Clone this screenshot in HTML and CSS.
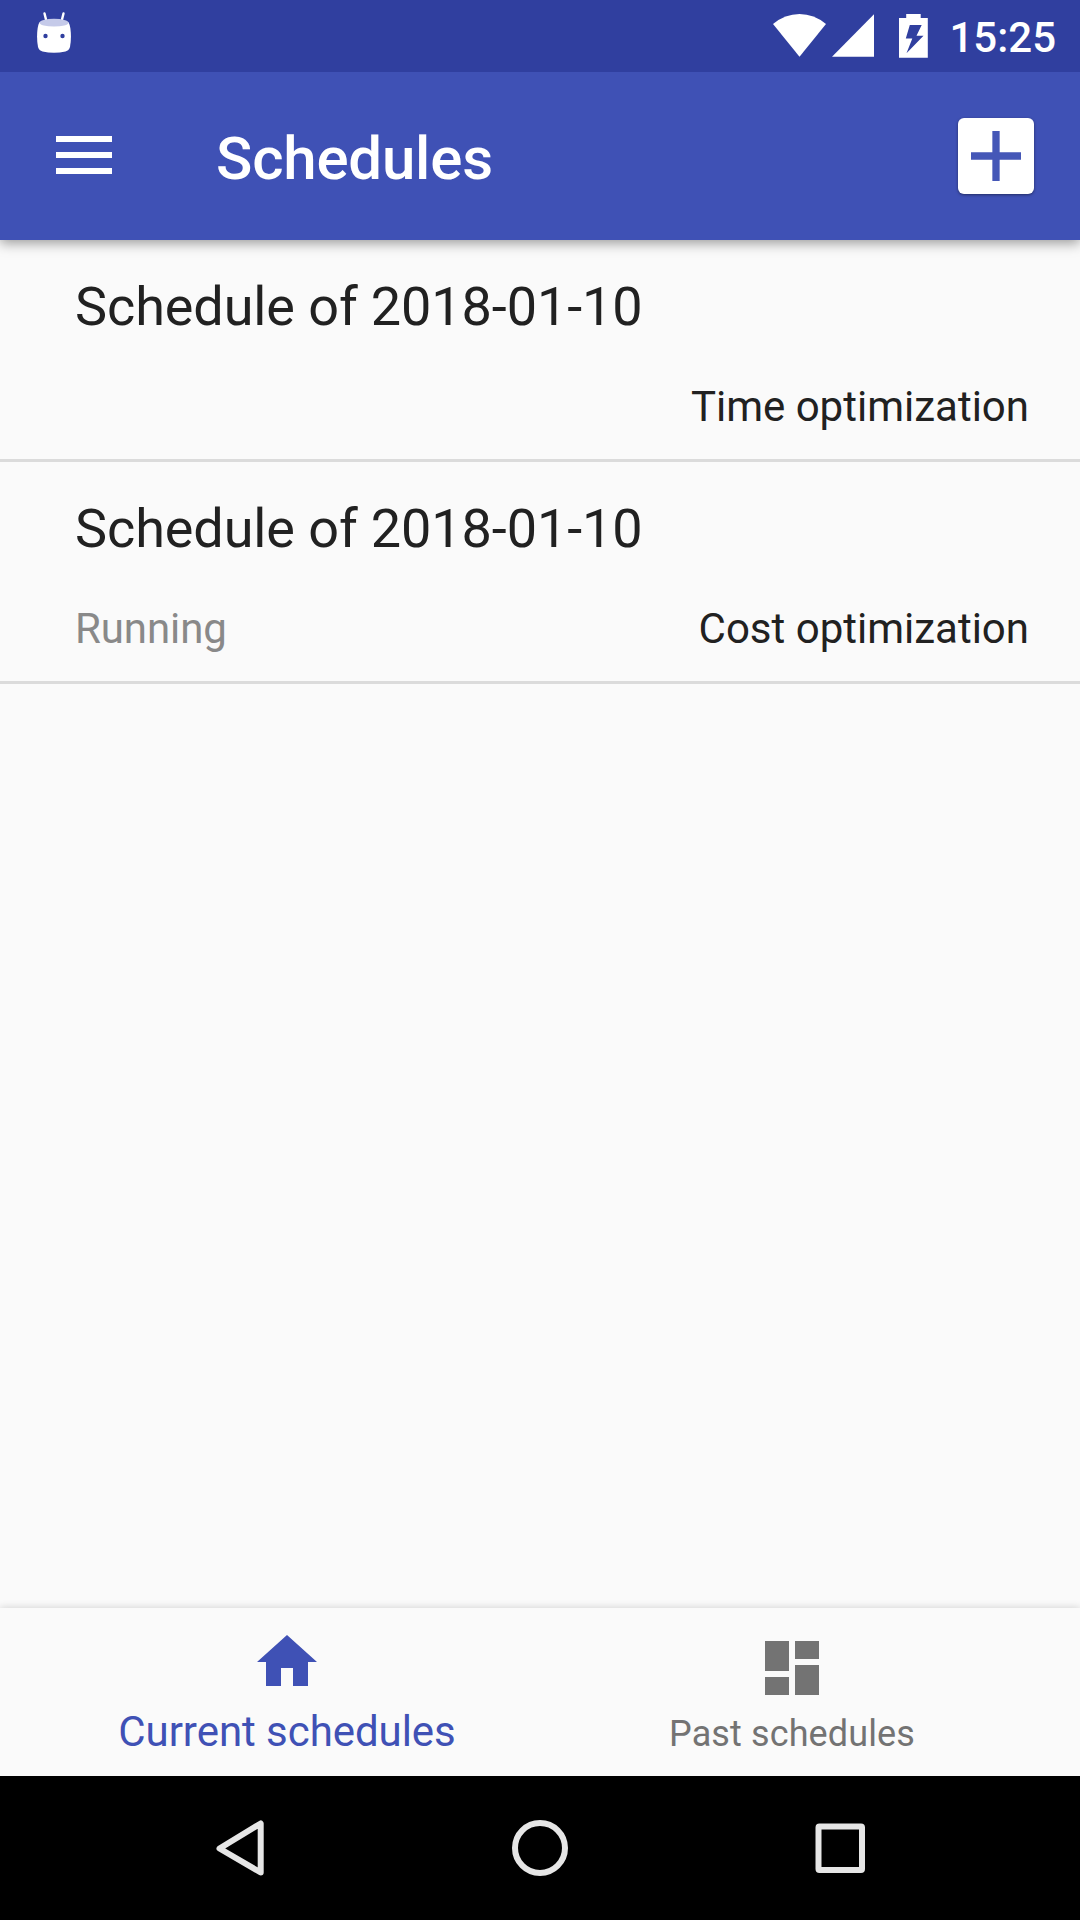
FILE: index.html
```html
<!DOCTYPE html>
<html lang="en">
<head>
<meta charset="utf-8">
<title>Schedules</title>
<link rel="stylesheet" href="styles.css">
</head>
<body>
<div class="screen">
  <header class="status-bar">
    <svg class="status-droid" width="34" height="42" viewBox="37 12 34 42">
      <path d="M44.5 13.5L46.5 21.5M63.5 13.5L61.5 21.5" stroke="#fff" stroke-width="2.4" stroke-linecap="round"/>
      <path d="M39.3 22.5C44 19 64 19 68.700 22.500C71 27 71.700 38 70 47Q69 50.500 65.500 51.500Q54 54 42.500 51.500Q39 50.500 38 47C36.300 38 37 27 39.300 22.500Z" fill="#fff"/>
      <ellipse cx="54" cy="22.700" rx="14.500" ry="3.900" fill="#c5cae9"/>
      <circle cx="45.500" cy="36" r="2.200" fill="#303f9f"/><circle cx="62.500" cy="36" r="2.200" fill="#303f9f"/>
    </svg>
    <div class="status-icons">
      <svg width="156" height="46" viewBox="772 13 156 46" fill="#fff">
        <path d="M799.500 56.700L773 24Q785 14 799.500 14T826 24Z"/>
        <path d="M832 56.800H874V14.300Z"/>
        <path fill-rule="evenodd" d="M899 57.700V18H906.200V14H920.700V18H927.800V57.700ZM909.800 25L905.800 38.500H912.300L906.500 53.300L923.500 35.800H916.500L921.700 25Z"/>
      </svg>
      <span class="clock">15:25</span>
    </div>
  </header>

  <div class="toolbar">
    <svg class="menu-icon" width="56" height="38" viewBox="0 0 56 38" fill="#fff">
      <path d="M0 0h56v6H0zM0 16h56v6H0zM0 32h56v6H0z"/>
    </svg>
    <h1 class="title">Schedules</h1>
    <button class="add" aria-label="Add schedule">
      <svg width="50" height="50" viewBox="0 0 50 50"><path d="M0 25H50M25 0V50" stroke="#4557b7" stroke-width="7.300"/></svg>
    </button>
  </div>

  <main class="list">
    <article class="row">
      <h2 class="row-title">Schedule of 2018-01-10</h2>
      <div class="row-meta"><span class="state"></span><span>Time optimization</span></div>
    </article>
    <article class="row">
      <h2 class="row-title">Schedule of 2018-01-10</h2>
      <div class="row-meta"><span class="state">Running</span><span>Cost optimization</span></div>
    </article>
  </main>

  <nav class="tabs">
    <a class="tab tab-active">
      <svg width="72" height="72" viewBox="0 0 24 24" fill="currentColor"><path d="M10 20v-6h4v6h5v-8h3L12 3 2 12h3v8z"/></svg>
      <span>Current schedules</span>
    </a>
    <a class="tab">
      <svg width="72" height="72" viewBox="0 0 24 24" fill="currentColor"><path d="M3 13h8V3H3v10zm0 8h8v-6H3v6zm10 0h8V11h-8v10zm0-18v6h8V3h-8z"/></svg>
      <span>Past schedules</span>
    </a>
  </nav>

  <footer class="system-nav">
    <svg width="60" height="60" viewBox="0 0 60 60"><path d="M50.700 5.500V54.500L9.500 30.500Z"/></svg>
    <svg width="60" height="60" viewBox="0 0 60 60"><circle cx="30" cy="30" r="25"/></svg>
    <svg width="60" height="60" viewBox="0 0 60 60"><rect x="8.500" y="8.500" width="43.500" height="43.500" rx="1"/></svg>
  </footer>
</div>
</body>
</html>
```
FILE: styles.css
```css
* { box-sizing: border-box; }
body { margin: 0; font-family: Roboto, sans-serif; background: #fafafa; }
svg { display: block; flex: none; }
h1, h2 { margin: 0; }

.screen { width: 1080px; height: 1920px; display: flex; flex-direction: column; overflow: hidden; }

.status-bar { height: 72px; flex: none; background: #303f9f; padding: 12px 24px 0 37px; display: flex; justify-content: space-between; align-items: flex-start; z-index: 2; }
.status-icons { display: flex; gap: 21px; padding-top: 1px; }
.clock { color: #fff; font-size: 42px; font-weight: 500; line-height: 50px; }

.toolbar { height: 168px; flex: none; background: #3f51b5; display: flex; align-items: center; padding: 0 46px 0 56px; box-shadow: 0 3px 12px rgba(0, 0, 0, .4); z-index: 1; }
.menu-icon { margin-top: -2px; }
.title { margin-left: 104px; color: #fff; font-size: 60px; font-weight: 500; line-height: 70px; padding-top: 6px; letter-spacing: -.2px; }
.add { margin-left: auto; width: 76px; height: 76px; padding: 0; border: 0; border-radius: 6px; background: #fff; display: flex; align-items: center; justify-content: center; box-shadow: 0 1px 3px rgba(0, 0, 0, .45); }

.list { flex: 1; }
.row { height: 222px; border-bottom: 3px solid #dbdbdb; padding: 35px 51px 0 75px; color: #212121; }
.row-title { font-size: 54px; font-weight: 400; line-height: 64px; letter-spacing: -.1px; }
.row-meta { display: flex; justify-content: space-between; margin-top: 43px; font-size: 42px; line-height: 50px; }
.state { color: #898989; letter-spacing: -.1px; }

.tabs { height: 168px; flex: none; background: #fafafa; display: flex; justify-content: center; box-shadow: 0 -1px 7px rgba(0, 0, 0, .14); }
.tab { width: 504px; display: flex; flex-direction: column; align-items: center; padding-top: 24px; color: #737373; font-size: 36px; line-height: 42px; letter-spacing: .12px; }
.tab span { margin-top: 9px; }
.tab-active { padding: 18px 2px 0 0; color: #3f51b5; font-size: 42px; line-height: 50px; letter-spacing: -.05px; }

.system-nav { height: 144px; flex: none; background: #000; display: flex; justify-content: center; align-items: center; gap: 240px; }
.system-nav path, .system-nav circle, .system-nav rect { fill: none; stroke: #e6e6e6; stroke-width: 6; stroke-linejoin: round; }
```
